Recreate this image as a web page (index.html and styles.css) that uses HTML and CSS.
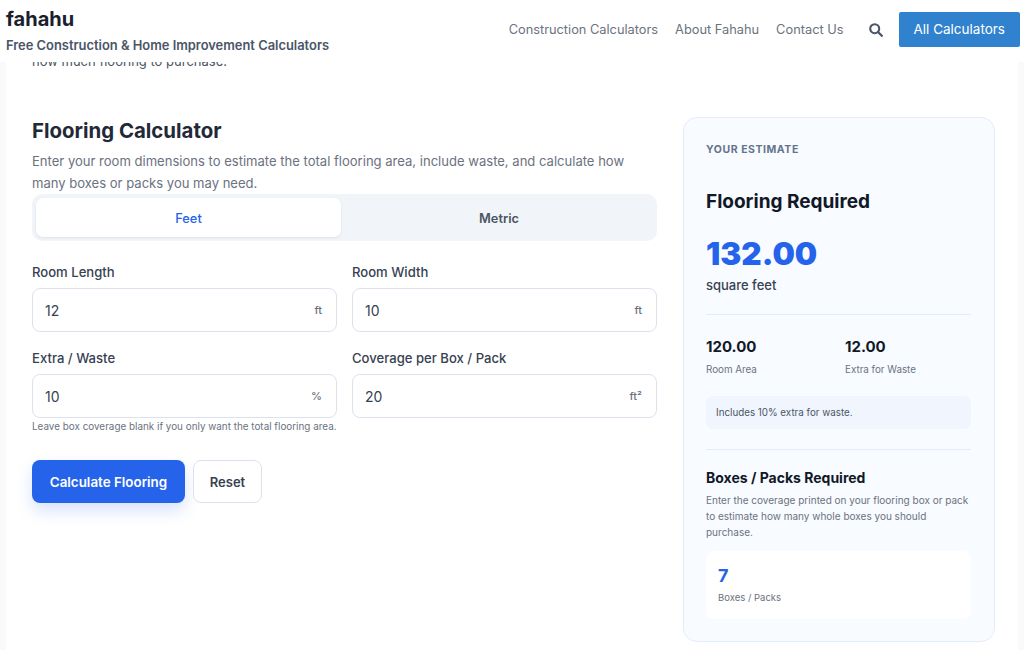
FILE: index.html
```html
<!DOCTYPE html>
<html lang="en">
<head>
    <meta charset="UTF-8">
    <meta name="viewport" content="width=device-width, initial-scale=1.0">
    <title>Flooring Calculator - fahahu</title>
    <link rel="stylesheet" href="styles.css">
</head>
<body>

    <header class="site-header">
        <div class="brand">
            <div class="brand-name">fahahu</div>
            <div class="brand-tagline">Free Construction &amp; Home Improvement Calculators</div>
        </div>
        <nav class="site-nav">
            <a href="#">Construction Calculators</a>
            <a href="#">About Fahahu</a>
            <a href="#">Contact Us</a>
            <svg class="search-icon" viewBox="0 0 14 14" aria-label="Search">
                <circle cx="5.7" cy="5.7" r="4.5" fill="none" stroke="currentColor" stroke-width="2.1"/>
                <line x1="9" y1="9" x2="12.8" y2="12.8" stroke="currentColor" stroke-width="2.3" stroke-linecap="round"/>
            </svg>
            <a href="#" class="all-button">All Calculators</a>
        </nav>
    </header>

    <main class="page-card">
        <p class="intro">how much flooring to purchase.</p>

        <div class="calculator">
            <section class="form-column">
                <h1>Flooring Calculator</h1>
                <p class="lead">Enter your room dimensions to estimate the total flooring area, include waste, and calculate how many boxes or packs you may need.</p>

                <div class="tabs">
                    <button class="tab active">Feet</button>
                    <button class="tab">Metric</button>
                </div>

                <div class="fields">
                    <div class="field">
                        <label>Room Length</label>
                        <div class="input-box"><input type="text" value="12"><span class="unit">ft</span></div>
                    </div>
                    <div class="field">
                        <label>Room Width</label>
                        <div class="input-box"><input type="text" value="10"><span class="unit">ft</span></div>
                    </div>
                    <div class="field">
                        <label>Extra / Waste</label>
                        <div class="input-box"><input type="text" value="10"><span class="unit">%</span></div>
                    </div>
                    <div class="field">
                        <label>Coverage per Box / Pack</label>
                        <div class="input-box"><input type="text" value="20"><span class="unit">ft²</span></div>
                    </div>
                </div>
                <p class="hint">Leave box coverage blank if you only want the total flooring area.</p>

                <div class="actions">
                    <button class="btn-primary">Calculate Flooring</button>
                    <button class="btn-reset">Reset</button>
                </div>
            </section>

            <aside class="estimate">
                <div class="eyebrow">YOUR ESTIMATE</div>
                <h2>Flooring Required</h2>
                <div class="big-number">132.00</div>
                <div class="big-unit">square feet</div>

                <div class="stats">
                    <div>
                        <div class="stat-value">120.00</div>
                        <div class="small-label">Room Area</div>
                    </div>
                    <div>
                        <div class="stat-value">12.00</div>
                        <div class="small-label">Extra for Waste</div>
                    </div>
                </div>

                <div class="note">Includes 10% extra for waste.</div>

                <div class="boxes">
                    <h3>Boxes / Packs Required</h3>
                    <p class="boxes-text">Enter the coverage printed on your flooring box or pack to estimate how many whole boxes you should purchase.</p>
                    <div class="boxes-result">
                        <div class="boxes-number">7</div>
                        <div class="small-label">Boxes / Packs</div>
                    </div>
                </div>
            </aside>
        </div>
    </main>

</body>
</html>
```

FILE: styles.css
```css
/* base */
html, body {
    height: 650px;
    overflow: hidden;
}

body {
    margin: 0;
    background-color: #f8fafc;
    color: #111827;
    font-family: Inter, "Noto Sans", sans-serif;
}

/* top bar */
.site-header {
    position: relative;
    z-index: 2;
    display: flex;
    justify-content: space-between;
    height: 62px;
    padding: 0 4px 0 6px;
    background-color: #ffffff;
}

.brand-name {
    margin-top: 6px;
    font-size: 20px;
    line-height: 26px;
    font-weight: 700;
    color: #1a202c;
}

.brand-tagline {
    margin-top: 6px;
    font-size: 12.9px;
    line-height: 15px;
    font-weight: 600;
    color: #4a5568;
}

.site-nav {
    display: flex;
    align-items: center;
    height: 59px;
    gap: 17px;
}

.site-nav a {
    font-size: 12.8px;
    color: #6b7280;
    text-decoration: none;
}

.search-icon {
    width: 14px;
    height: 14px;
    margin-left: 8px;
    color: #4a5568;
}

.site-nav .all-button {
    margin-left: -1px;
    padding: 0 15px;
    height: 35px;
    line-height: 35px;
    border-radius: 2px;
    background-color: #3182ce;
    font-size: 13.5px;
    color: #ffffff;
}

/* page */
.page-card {
    margin: 0 6px;
    padding: 0 23px 0 26px;
    background-color: #ffffff;
    height: 600px;
}

.intro {
    margin: -12px 0 0;
    font-size: 13px;
    line-height: 22px;
    color: #4b5563;
}

.calculator {
    display: flex;
    gap: 26px;
    margin-top: 45px;
}

.form-column {
    width: 625px;
    padding-top: 1px;
}

h1 {
    margin: 0;
    font-size: 20.4px;
    line-height: 26px;
    font-weight: 700;
    color: #1f2937;
}

.lead {
    margin: 6px 0 0;
    font-size: 13.05px;
    line-height: 22px;
    color: #6b7280;
}

/* feet / metric */
.tabs {
    display: flex;
    padding: 4px 0 4px 4px;
    border-radius: 10px;
    background-color: #f1f4f9;
}

.tab {
    flex: 1;
    height: 39px;
    padding: 1px 0 0;
    border: none;
    border-radius: 7px;
    background: none;
    font-family: inherit;
    font-size: 12.8px;
    font-weight: 600;
    color: #4b5563;
}

.tab.active {
    flex: none;
    width: 305px;
    background-color: #ffffff;
    color: #2563eb;
    font-weight: 500;
    box-shadow: 0 1px 3px rgba(0, 0, 0, 0.08);
}

/* inputs */
.fields {
    display: grid;
    grid-template-columns: 1fr 1fr;
    column-gap: 15px;
    row-gap: 16px;
    margin-top: 21px;
}

.field label {
    display: block;
    margin-bottom: 6px;
    font-size: 13.1px;
    line-height: 20px;
    font-weight: 500;
    color: #374151;
}

.input-box {
    display: flex;
    align-items: center;
    height: 42px;
    padding: 0 14px 0 12px;
    border: 1px solid #dbe2ee;
    border-radius: 8px;
    background-color: #ffffff;
}

.input-box input {
    flex: 1;
    min-width: 0;
    padding: 0;
    border: none;
    outline: none;
    background: none;
    font-family: inherit;
    font-size: 14px;
    color: #374151;
}

.unit {
    font-size: 11px;
    font-weight: 500;
    color: #6b7280;
}

.hint {
    margin: 1px 0 0;
    font-size: 9.9px;
    line-height: 14px;
    color: #6b7280;
}

.actions {
    display: flex;
    gap: 8px;
    margin-top: 27px;
}

.btn-primary, .btn-reset {
    height: 43px;
    border-radius: 8px;
    font-family: inherit;
    font-size: 13px;
    font-weight: 600;
}

.btn-primary {
    width: 153px;
    border: none;
    background-color: #2563eb;
    font-size: 13.4px;
    color: #ffffff;
    box-shadow: 0 8px 16px rgba(37, 99, 235, 0.18);
}

.btn-reset {
    width: 69px;
    border: 1px solid #dbe2ee;
    background-color: #ffffff;
    color: #374151;
}

/* estimate panel */
.estimate {
    width: 312px;
    height: 525px;
    box-sizing: border-box;
    padding: 25px 23px 0 22px;
    border: 1px solid #e3edf9;
    border-radius: 14px;
    background-color: #f8fbff;
}

.eyebrow {
    font-size: 10.5px;
    line-height: 13px;
    font-weight: 700;
    letter-spacing: 0.55px;
    color: #64748b;
}

h2 {
    margin: 33px 0 0;
    font-size: 19px;
    line-height: 26px;
    font-weight: 700;
    color: #111827;
}

.big-number {
    margin-top: 17px;
    font-size: 31.5px;
    line-height: 44px;
    font-weight: 900;
    color: #2563eb;
}

.big-unit {
    padding-bottom: 20px;
    border-bottom: 1px solid #e3edf9;
    font-size: 13px;
    line-height: 18px;
    font-weight: 500;
    color: #374151;
}

.stats {
    display: grid;
    grid-template-columns: 139px 1fr;
    margin-top: 21px;
}

.stat-value {
    font-size: 15px;
    line-height: 22px;
    font-weight: 700;
    color: #111827;
}

.small-label {
    margin-top: 5px;
    font-size: 9.8px;
    line-height: 14px;
    color: #6b7280;
}

.note {
    margin-top: 19px;
    padding: 0 10px;
    height: 33px;
    line-height: 33px;
    border-radius: 7px;
    background-color: #f0f5fe;
    font-size: 9.8px;
    color: #4b5563;
}

.boxes {
    margin-top: 20px;
    padding-top: 18px;
    border-top: 1px solid #e3edf9;
}

h3 {
    margin: 0;
    font-size: 14px;
    line-height: 20px;
    font-weight: 700;
    color: #111827;
}

.boxes-text {
    margin: 4px 0 0;
    font-size: 10px;
    line-height: 16px;
    color: #6b7280;
}

.boxes-result {
    height: 68px;
    box-sizing: border-box;
    margin-top: 11px;
    padding: 13px 12px 0;
    border-radius: 8px;
    background-color: #ffffff;
}

.boxes-result .small-label {
    margin-top: 3px;
    font-size: 9.5px;
}

.boxes-number {
    font-size: 18px;
    line-height: 24px;
    font-weight: 700;
    color: #2563eb;
}
```
